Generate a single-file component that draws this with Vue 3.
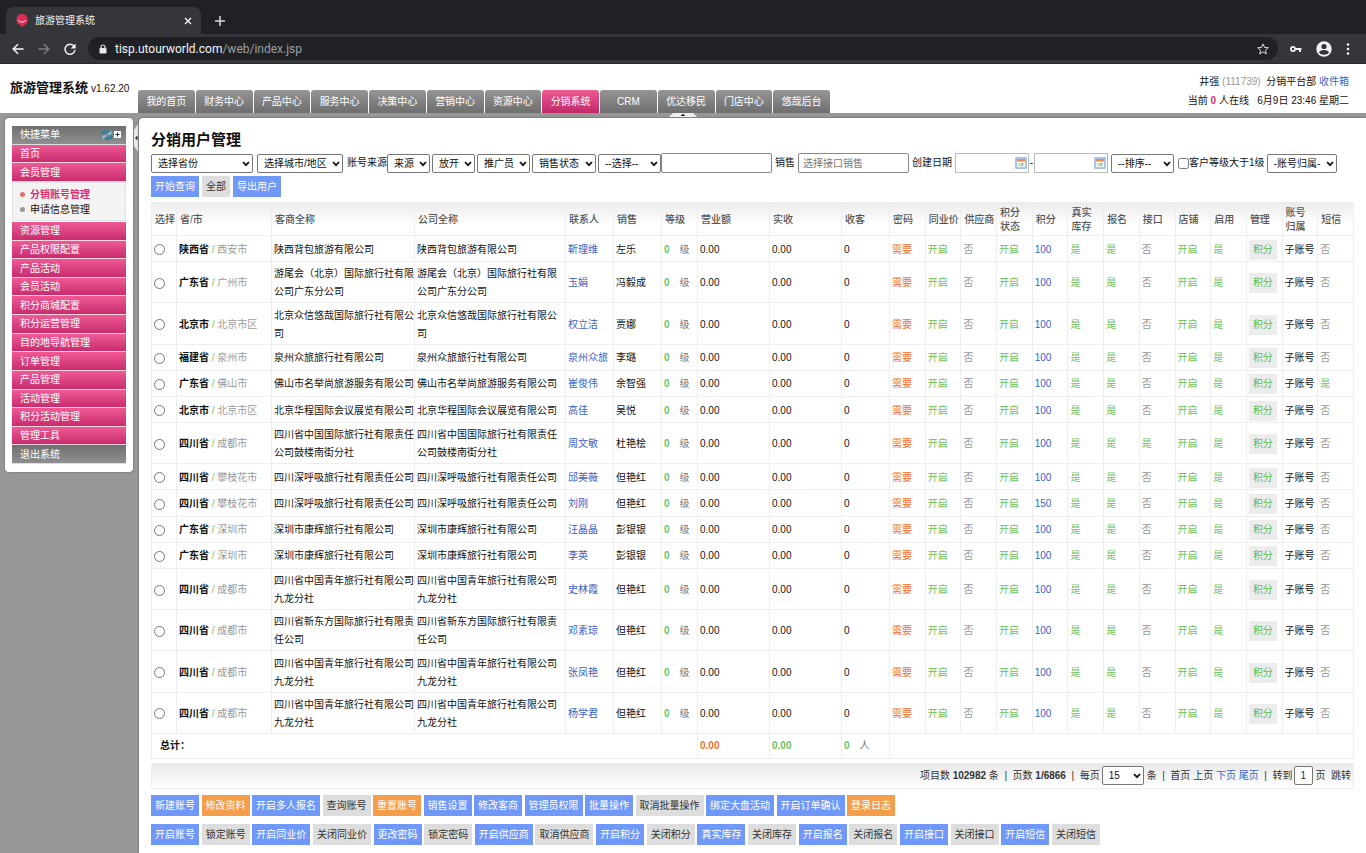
<script setup>
const tabs = ['我的首页', '财务中心', '产品中心', '服务中心', '决策中心', '营销中心', '资源中心', '分销系统', 'CRM', '优达移民', '门店中心', '悠哉后台']
const topMenu = ['首页', '会员管理']
const menu = ['资源管理', '产品权限配置', '产品活动', '会员活动', '积分商城配置', '积分运营管理', '目的地导航管理', '订单管理', '产品管理', '活动管理', '积分活动管理', '管理工具']

const heads = ['选择', '省/市', '客商全称', '公司全称', '联系人', '销售', '等级', '营业额', '实收', '收客', '密码', '同业价', '供应商', '积分状态', '积分', '真实库存', '报名', '接口', '店铺', '启用', '管理', '账号归属', '短信']
const row = (province, city, company, contact, sales, extra = {}) => ({ province, city, company, contact, sales, points: 100, api: '否', sms: '否', ...extra })
const rows = [
  row('陕西省', '西安市', '陕西背包旅游有限公司', '靳理维', '左乐'),
  row('广东省', '广州市', '游尾会（北京）国际旅行社有限公司广东分公司', '玉娟', '冯毅成'),
  row('北京市', '北京市区', '北京众信悠哉国际旅行社有限公司', '权立洁', '贾娜'),
  row('福建省', '泉州市', '泉州众旅旅行社有限公司', '泉州众旅', '李璐'),
  row('广东省', '佛山市', '佛山市名举尚旅游服务有限公司', '崔俊伟', '余智强', { sms: '是' }),
  row('北京市', '北京市区', '北京华程国际会议展览有限公司', '高佳', '吴悦'),
  row('四川省', '成都市', '四川省中国国际旅行社有限责任公司鼓楼南街分社', '周文敏', '杜艳桧', { api: '是' }),
  row('四川省', '攀枝花市', '四川深呼吸旅行社有限责任公司', '邱美薇', '但艳红'),
  row('四川省', '攀枝花市', '四川深呼吸旅行社有限责任公司', '刘刚', '但艳红', { points: 150 }),
  row('广东省', '深圳市', '深圳市康辉旅行社有限公司', '汪晶晶', '彭银银'),
  row('广东省', '深圳市', '深圳市康辉旅行社有限公司', '李英', '彭银银'),
  row('四川省', '成都市', '四川省中国青年旅行社有限公司九龙分社', '史林霞', '但艳红'),
  row('四川省', '成都市', '四川省新东方国际旅行社有限责任公司', '邓素琼', '但艳红'),
  row('四川省', '成都市', '四川省中国青年旅行社有限公司九龙分社', '张凤艳', '但艳红'),
  row('四川省', '成都市', '四川省中国青年旅行社有限公司九龙分社', '杨学君', '但艳红'),
]

const mainActions = [
  ['新建账号', 'blue'], ['修改资料', 'orange'], ['开启多人报名', 'blue'], ['查询账号', 'grey'], ['重置账号', 'orange'],
  ['销售设置', 'blue'], ['修改客商', 'blue'], ['管理员权限', 'blue'], ['批量操作', 'blue'], ['取消批量操作', 'grey'],
  ['绑定大盘活动', 'blue'], ['开启订单确认', 'blue'], ['登录日志', 'orange'],
]
const toggleActions = ['开启账号', '锁定账号', '开启同业价', '关闭同业价', '更改密码', '锁定密码', '开启供应商', '取消供应商', '开启积分', '关闭积分', '真实库存', '关闭库存', '开启报名', '关闭报名', '开启接口', '关闭接口', '开启短信', '关闭短信']

const filters = [
  { kind: 'select', text: '选择省份', size: 'w102 gap' },
  { kind: 'select', text: '选择城市/地区', size: 'w86 gap' },
  { kind: 'label', text: '账号来源', target: 'f3' },
  { kind: 'select', text: '来源', size: 'w43' },
  { kind: 'select', text: '放开', size: 'w43' },
  { kind: 'select', text: '推广员', size: 'w53' },
  { kind: 'select', text: '销售状态', size: 'w64' },
  { kind: 'select', text: '--选择--', size: 'w63 joined' },
]
</script>

<template>
  <div class="window">
    <header class="browser">
      <div class="strip">
        <div class="page-tab">
          <svg class="fav" viewBox="0 0 24 26"><path d="M12 0a11.5 11.5 0 0 1 4 22.3L12.500 26 9 22.500A11.500 11.500 0 0 1 12 0z" fill="#d92f55" /><path d="M5.500 13c3.500 4.200 9.500 4.200 13 0" fill="none" stroke="#fff" stroke-width="2" stroke-linecap="round" /></svg>
          <span class="page-name">旅游管理系统</span>
          <button class="plain" aria-label="关闭标签页"><svg class="i8" viewBox="0 0 8 8"><path d="M1 1l6 6M7 1L1 7" stroke="#f1f3f4" stroke-width="1.400" /></svg></button>
        </div>
        <button class="plain add" aria-label="新标签页"><svg class="i10" viewBox="0 0 10 10"><path d="M5 0v10M0 5h10" stroke="#dadce0" stroke-width="1.500" /></svg></button>
      </div>
      <div class="toolbar">
        <button class="plain" aria-label="后退"><svg class="i12" viewBox="0 0 12 12"><path d="M11.500 6H1.500M6 1.200L1.200 6 6 10.800" fill="none" stroke="#f1f3f4" stroke-width="1.500" /></svg></button>
        <button class="plain" aria-label="前进"><svg class="i12" viewBox="0 0 12 12"><path d="M.5 6h10M6 1.200L10.800 6 6 10.800" fill="none" stroke="#7d7f83" stroke-width="1.500" /></svg></button>
        <button class="plain" aria-label="刷新"><svg class="i12" viewBox="0 0 12 12"><path d="M10.200 3.500A5 5 0 1 0 11 7" fill="none" stroke="#f1f3f4" stroke-width="1.500" /><path d="M11.600.5v5h-5z" fill="#f1f3f4" /></svg></button>
        <div class="address">
          <svg class="lock" viewBox="0 0 8 10"><path d="M2 4.500V3a2 2 0 0 1 4 0v1.500" fill="none" stroke="#e8eaed" stroke-width="1.200" /><rect x=".5" y="4" width="7" height="5.500" rx=".8" fill="#e8eaed" /></svg>
          <span class="url">tisp.utourworld.com<span class="path">/web/index.jsp</span></span>
          <svg class="i12" viewBox="0 0 12 12"><path d="M6 .9l1.500 3.500 3.800.3-2.900 2.500.9 3.700L6 8.900l-3.300 2 .9-3.700L.7 4.700l3.800-.3z" fill="none" stroke="#dadce0" stroke-width="1" /></svg>
        </div>
        <svg class="i12" viewBox="0 0 12 12"><circle cx="3" cy="6" r="2.100" fill="none" stroke="#f1f3f4" stroke-width="1.700" /><path d="M5.500 6h6M10 6.500v2.500" stroke="#f1f3f4" stroke-width="1.900" /></svg>
        <svg class="i16" viewBox="0 0 16 16"><circle cx="8" cy="8" r="7.700" fill="#f1f3f4" /><circle cx="8" cy="5.500" r="2.600" fill="#35363a" /><path d="M3 11.500c1.800-3.200 8.200-3.200 10 0-2 3-8 3-10 0z" fill="#35363a" /></svg>
        <svg class="dots" viewBox="0 0 4 12"><circle cx="2" cy="1.500" r="1.300" fill="#f1f3f4" /><circle cx="2" cy="6" r="1.300" fill="#f1f3f4" /><circle cx="2" cy="10.500" r="1.300" fill="#f1f3f4" /></svg>
      </div>
    </header>

    <div class="banner">
      <div class="brand"><strong>旅游管理系统</strong><span>v1.62.20</span></div>
      <nav class="tabs">
        <a v-for="t in tabs" :key="t" href="#" :class="{ on: t === '分销系统' }">{{ t }}</a>
      </nav>
      <div class="who">
        <p>井强 <span class="muted">(111739)</span>&nbsp; 分销平台部 <a href="#">收件箱</a></p>
        <p>当前 <b class="pink">0</b> 人在线 &nbsp; 6月9日 23:46 星期二</p>
      </div>
    </div>

    <div class="body">
      <svg class="bump" viewBox="0 0 28 4"><path d="M0 4L4 0h20l4 4z" fill="#eee" /><path d="M11.500 3L14 .8 16.500 3z" fill="#222" /></svg>
      <aside class="side">
        <div class="group top">
          <div class="item dark">快捷菜单
            <svg class="sync" viewBox="0 0 12 10"><path d="M1.500 4.500C2 1 6 .6 8 2.500M10.500 5.500C10 9 6 9.400 4 7.500" fill="none" stroke="#2f7f9f" stroke-width="2.400" /><path d="M10.500.3v4.500H5.500zM1.500 9.700V5.200h5z" fill="#86c3da" /></svg>
            <svg class="plus" viewBox="0 0 7 7"><path d="M0 0h7v7H0z" fill="#fff" /><path d="M3.500 1.500v4M1.500 3.500h4" stroke="#222" stroke-width="1" /></svg>
          </div>
          <a v-for="m in topMenu" :key="m" href="#" class="item">{{ m }}</a>
        </div>
        <ul class="sub">
          <li class="current"><a href="#">分销账号管理</a></li>
          <li><a href="#">申请信息管理</a></li>
        </ul>
        <div class="group rest">
          <a v-for="m in menu" :key="m" href="#" class="item">{{ m }}</a>
          <a href="#" class="item dark">退出系统</a>
        </div>
      </aside>
      <button class="fold" aria-label="收起菜单"><svg viewBox="0 0 4 28"><path d="M4 0v28L0 22V6z" fill="#e8e8e8" /><path d="M3.500 11.500v5L1 14z" fill="#222" /></svg></button>

      <main>
        <h1>分销用户管理</h1>
        <form class="filters" @submit.prevent>
          <template v-for="(f, i) in filters" :key="i">
            <label v-if="f.kind === 'label'" :for="f.target">{{ f.text }}</label>
            <span v-else class="pick" :class="f.size">
              <select :id="'f' + i" :aria-label="f.text"><option>{{ f.text }}</option></select>
              <svg viewBox="0 0 8 6"><path d="M1 1l3 3.200L7 1" fill="none" stroke="#111" stroke-width="1.800" /></svg>
            </span>
          </template>
          <input class="text" type="text" aria-label="关键字">
          <label class="mid" for="sale">销售</label>
          <input id="sale" class="text" type="text" placeholder="选择接口销售">
          <label class="mid" for="from">创建日期</label>
          <template v-for="d in ['from', 'to']" :key="d">
            <span class="date">
              <input :id="d" type="text" :aria-label="d === 'to' ? '结束日期' : '创建日期'">
              <svg viewBox="0 0 12 12"><rect width="12" height="12" rx="1" fill="#a8c5ec" /><rect x="2" y="2" width="8" height="8" fill="#f4f5ee" /><rect x="2" y="2" width="8" height="2.500" fill="#f08a4b" /><path d="M4 6.500v2M6 6.500h2v2H6z" fill="none" stroke="#8db889" /></svg>
            </span>
            <span v-if="d === 'from'" class="dash">-</span>
          </template>
          <span class="pick w63 lead">
            <select aria-label="排序"><option>--排序--</option></select>
            <svg viewBox="0 0 8 6"><path d="M1 1l3 3.200L7 1" fill="none" stroke="#111" stroke-width="1.800" /></svg>
          </span>
          <input id="lv" class="tick" type="checkbox"><label for="lv">客户等级大于1级</label>
          <span class="pick w70">
            <select aria-label="账号归属"><option>-账号归属-</option></select>
            <svg viewBox="0 0 8 6"><path d="M1 1l3 3.200L7 1" fill="none" stroke="#111" stroke-width="1.800" /></svg>
          </span>
        </form>
        <div class="query">
          <button class="btn blue">开始查询</button>
          <button class="btn grey">全部</button>
          <button class="btn blue">导出用户</button>
        </div>

        <table>
          <colgroup>
            <col class="c-pick"><col class="c-area"><col class="c-client"><col class="c-company"><col class="c-name"><col class="c-name"><col class="c-level"><col class="c-money"><col class="c-money"><col class="c-name">
            <col v-for="n in 13" :key="n">
          </colgroup>
          <thead>
            <tr><th v-for="h in heads" :key="h" scope="col">{{ h }}</th></tr>
          </thead>
          <tbody>
            <tr v-for="(r, i) in rows" :key="i">
              <td><input class="radio" type="radio" name="account" :aria-label="r.contact"></td>
              <td><b>{{ r.province }}</b> <span class="green">/</span> <span class="muted">{{ r.city }}</span></td>
              <td>{{ r.company }}</td>
              <td class="company">{{ r.company }}</td>
              <td><a href="#">{{ r.contact }}</a></td>
              <td>{{ r.sales }}</td>
              <td><b class="green">0</b><span class="unit">级</span></td>
              <td>0.00</td>
              <td>0.00</td>
              <td>0</td>
              <td class="orange-text">需要</td>
              <td class="green">开启</td>
              <td class="muted">否</td>
              <td class="green">开启</td>
              <td><a href="#">{{ r.points }}</a></td>
              <td class="green">是</td>
              <td class="green">是</td>
              <td :class="r.api === '是' ? 'green' : 'muted'">{{ r.api }}</td>
              <td class="green">开启</td>
              <td class="green">是</td>
              <td><button class="point">积分</button></td>
              <td>子账号</td>
              <td :class="r.sms === '是' ? 'green' : 'muted'">{{ r.sms }}</td>
            </tr>
          </tbody>
          <tfoot>
            <tr>
              <td colspan="7" class="sum"><b>总计：</b></td>
              <td><b class="orange-text">0.00</b></td>
              <td><b class="green">0.00</b></td>
              <td><b class="green">0</b><span class="unit">人</span></td>
              <td colspan="13"></td>
            </tr>
          </tfoot>
        </table>

        <div class="pager">
          <span>项目数 <b>102982</b> 条 &nbsp;|&nbsp; 页数 <b>1/6866</b> &nbsp;|&nbsp; <label for="per">每页</label></span>
          <span class="pick w42">
            <select id="per"><option>15</option></select>
            <svg viewBox="0 0 8 6"><path d="M1 1l3 3.200L7 1" fill="none" stroke="#111" stroke-width="1.800" /></svg>
          </span>
          <span>条 &nbsp;|&nbsp; 首页 上页 <a href="#">下页</a> <a href="#">尾页</a> &nbsp;|&nbsp; <label for="go">转到</label></span>
          <input id="go" type="text" value="1">
          <span>页 &nbsp;跳转</span>
        </div>

        <div class="actions first">
          <button v-for="a in mainActions" :key="a[0]" class="btn" :class="a[1]">{{ a[0] }}</button>
        </div>
        <div class="actions second">
          <button v-for="(a, i) in toggleActions" :key="a" class="btn" :class="i % 2 ? 'grey' : 'blue'">{{ a }}</button>
        </div>
      </main>
    </div>
  </div>
</template>

<style>
body { margin: 0; overflow: hidden; }
</style>

<style scoped>
.window { min-height: 100vh; display: flex; flex-direction: column; background: #fff; color: #111; font: 10px/18px "Liberation Sans", "Noto Sans CJK SC", sans-serif; }
.window * { box-sizing: border-box; }
svg { display: block; flex: none; }
a { color: #3a62c8; text-decoration: none; }
button, input, select { font: inherit; color: inherit; margin: 0; }
p { margin: 0; }
.i8 { width: 8px; height: 8px; }
.i10 { width: 10px; height: 10px; }
.i12 { width: 12px; height: 12px; }
.i16 { width: 16px; height: 16px; }
.plain { border: 0; padding: 0; background: none; }

.browser { background: #35363a; border-bottom: 1px solid #28292c; }
.strip { height: 34px; padding: 7px 0 0 6px; display: flex; background: #202124; }
.page-tab { width: 195px; height: 27px; padding: 0 9px 0 10px; display: flex; align-items: center; background: #35363a; border-radius: 7px 7px 0 0; color: #f1f3f4; }
.fav { width: 12px; height: 13px; margin-right: 7px; }
.page-name { flex: 1; }
.add { align-self: center; margin-left: 14px; }
.toolbar { height: 29px; padding: 0 16px 0 12px; display: flex; align-items: center; gap: 14px; }
.toolbar .plain { width: 12px; }
.address { flex: 1; height: 23px; margin: 0 -2px 0 -2px; padding: 0 9px 0 11px; display: flex; align-items: center; background: #202124; border-radius: 12px; }
.lock { width: 8px; height: 10px; }
.url { flex: 1; margin-left: 8px; color: #f1f3f4; font: 12px/20px Roboto, "Liberation Sans", sans-serif; }
.path { color: #9aa0a6; }
.dots { width: 4px; height: 12px; }

.banner { height: 49px; display: flex; }
.brand { width: 138px; padding: 14px 0 0 10px; white-space: nowrap; line-height: 20px; }
.brand strong { margin-right: 3px; font-size: 13px; }
.tabs { width: 692px; margin-top: 26px; display: grid; grid-template-columns: repeat(12, 1fr); gap: 1px; }
.tabs a { display: flex; align-items: center; justify-content: center; border-radius: 3px 3px 0 0; background: linear-gradient(#959595, #6e6e6e); color: #fff; }
.tabs a.on { background: linear-gradient(#ee5a94, #c0296a); }
.who { flex: 1; padding: 8px 17px 0 0; text-align: right; line-height: 19px; }
.muted { color: #999; }
.pink { color: #d92f75; }

.body { flex: 1; position: relative; display: flex; align-items: flex-start; padding-top: 5px; background: #979797; }
.bump { position: absolute; top: 0; left: 50%; width: 28px; height: 4px; margin-left: -14px; }
.side { width: 128px; margin-left: 5px; padding: 8px 7px; background: #fff; border-radius: 4px; box-shadow: 0 0 2px #555; }
.group { display: grid; grid-auto-rows: 1fr; }
.top { height: 56px; }
.rest { height: 242px; }
.item { position: relative; display: flex; align-items: center; padding: 1px 0 0 8px; border-bottom: 1px solid #f6d3e0; background: linear-gradient(#ee5a94, #c92c6d); color: #fff; line-height: 16px; }
.item.dark { border-color: #ddd; background: linear-gradient(#707070, #8f8f8f); }
.sync { position: absolute; right: 13px; top: 4px; width: 12px; height: 10px; }
.plus { position: absolute; right: 5px; top: 5px; width: 7px; height: 7px; }
.sub { height: 39px; margin: 0 0 1px; padding: 4px 0 0 7px; list-style: none; background: #f3f3f3; border: 1px solid #e2e2e2; line-height: 15px; }
.sub li { display: flex; align-items: center; gap: 5px; }
.sub li::before { content: ""; width: 5px; height: 5px; border-radius: 50%; background: #999; }
.sub a { color: #111; }
.sub .current::before { background: #e0736b; }
.sub .current a { color: #d92f75; font-weight: 700; }
.fold { width: 4px; height: 28px; margin: 6px 1px 0; padding: 0; border: 0; background: none; }
.fold svg { width: 4px; height: 28px; }

main { flex: 1; min-width: 0; align-self: stretch; padding: 12px 12px 8px; background: #fff; border-radius: 4px 0 0; box-shadow: 0 0 2px #444; }
h1 { margin: 0; font-size: 15px; font-weight: 700; line-height: 20px; }
.filters { height: 22px; margin-top: 2px; display: flex; align-items: center; white-space: nowrap; }
.pick { position: relative; flex: none; margin-right: 2px; }
.pick.gap { margin-right: 4px; }
.pick.joined { margin-right: 0; }
.pick.lead { margin-left: 3px; margin-right: 4px; }
.pick select { display: block; width: 100%; height: 19px; padding: 0 0 0 6px; border: 1px solid #777; border-radius: 2px; background: #fff; appearance: none; line-height: 17px; }
.pick svg { position: absolute; right: 3px; top: 7px; width: 8px; height: 6px; pointer-events: none; }
.w102 { width: 102px; }
.w86 { width: 86px; }
.w43 { width: 43px; }
.w53 { width: 53px; }
.w64 { width: 64px; }
.w63 { width: 63px; }
.w70 { width: 70px; }
.w42 { width: 42px; }
.text { width: 111px; height: 20px; padding: 0 4px; border: 1px solid #888; border-radius: 2px; }
.text::placeholder { color: #777; }
.mid { margin: 0 3px; }
.date { position: relative; }
.date input { display: block; width: 74px; height: 20px; padding: 0 16px 0 3px; border: 1px solid #bbb; }
.date svg { position: absolute; right: 2px; top: 4px; width: 12px; height: 12px; }
.dash { width: 5px; text-align: center; }
.tick { width: 11px; height: 11px; }
.filters .w70 { margin-left: 2px; }
.query { display: flex; gap: 3px; margin-top: 2px; }
.btn { flex: none; height: 21px; padding: 0 4px; border: 0; line-height: 20px; white-space: nowrap; }
.blue { background: #7098f8; color: #fff; }
.orange { background: #f49d4b; color: #fff; }
.grey { background: #ddd; color: #333; }

table { width: 100%; height: 557px; margin-top: 5px; table-layout: fixed; border-collapse: separate; border-spacing: 0; border: solid #eee; border-width: 0 1px 1px 0; }
.c-pick { width: 25px; }
.c-area { width: 95px; }
.c-client { width: 143px; }
.c-company { width: 151px; }
.c-name { width: 48px; }
.c-level { width: 36px; }
.c-money { width: 72px; }
th, td { height: 26px; padding: 3px 0 1px 2px; border: solid #eee; border-width: 1px 0 0 1px; text-align: left; vertical-align: middle; }
thead { background: linear-gradient(#ebebeb, #fff 70%); }
th { height: 33px; padding: 3px 3px 1px; border-top: 0; color: #555; font-weight: 500; line-height: 14px; }
th:nth-child(12), th:nth-child(13), th:first-child { padding-right: 0; }
td.company { padding-right: 7px; }
.radio { display: block; width: 11px; height: 11px; margin-left: 0; }
.unit { margin-left: 10px; color: #777; }
.green { color: #6cc25c; }
.orange-text { color: #f36f2d; }
.point { display: block; width: 28px; height: 20px; padding: 0; border: 0; background: #ececec; color: #5bbd45; }
tfoot td { height: 25px; padding: 2px 0 2px 2px; }
tfoot .sum { padding-left: 8px; }

.pager { height: 26px; margin-top: 4px; padding: 0 2px; display: flex; align-items: center; justify-content: flex-end; gap: 2px; border: 1px solid #eee; border-top: 0; background: linear-gradient(#e8e8e8, #fff); color: #333; }
.pager .pick { margin-right: 1px; color: #111; }
.pager input { width: 19px; height: 19px; padding: 0 5px; border: 1px solid #777; border-radius: 2px; }
.actions { display: flex; justify-content: space-between; }
.first { max-width: 744px; margin-top: 6px; }
.second { max-width: 949px; margin-top: 8px; }
</style>
